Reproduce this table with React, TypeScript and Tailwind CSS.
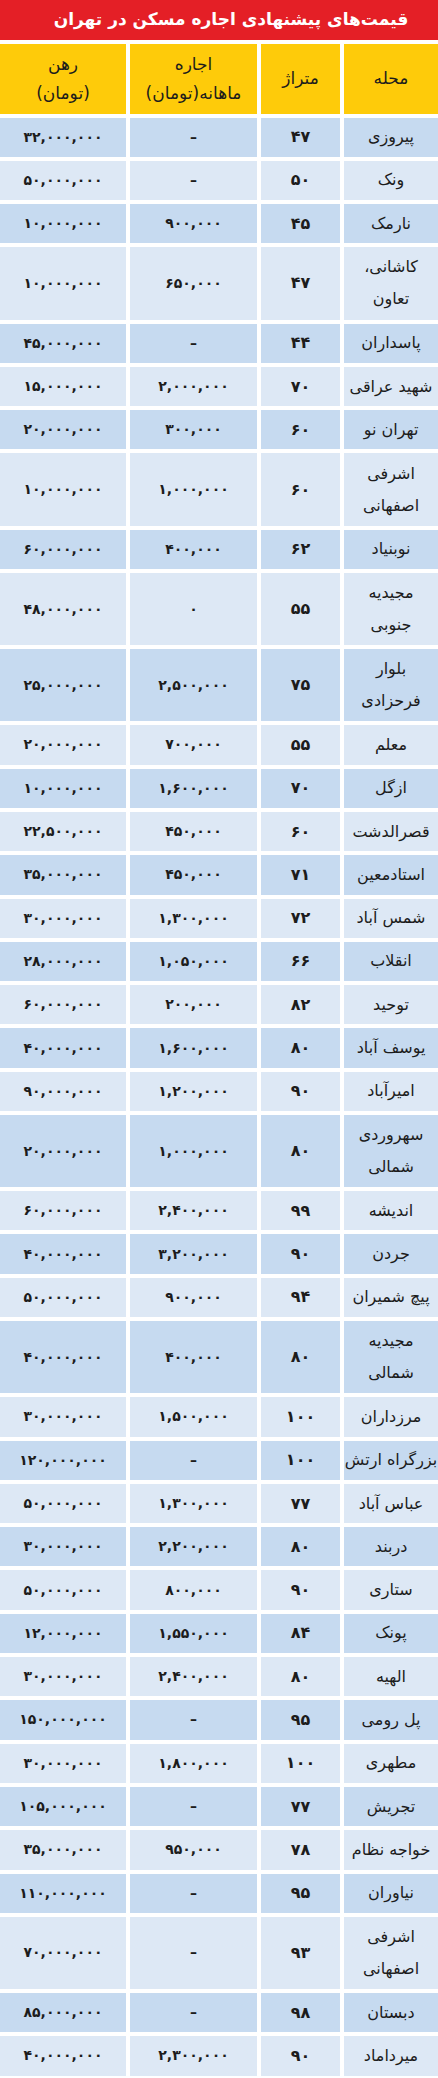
import React from "react";

const fa = (s: string) => s.replace(/[0-9]/g, (d) => "۰۱۲۳۴۵۶۷۸۹"[Number(d)]);

type Row = { name: string[]; area: string; rent: string; deposit: string };

const rows: Row[] = [
  { name: ["پیروزی"], area: "47", rent: "-", deposit: "32,000,000" },
  { name: ["ونک"], area: "50", rent: "-", deposit: "50,000,000" },
  { name: ["نارمک"], area: "45", rent: "900,000", deposit: "10,000,000" },
  { name: ["کاشانی،", "تعاون"], area: "47", rent: "650,000", deposit: "10,000,000" },
  { name: ["پاسداران"], area: "44", rent: "-", deposit: "45,000,000" },
  { name: ["شهید عراقی"], area: "70", rent: "2,000,000", deposit: "15,000,000" },
  { name: ["تهران نو"], area: "60", rent: "300,000", deposit: "20,000,000" },
  { name: ["اشرفی", "اصفهانی"], area: "60", rent: "1,000,000", deposit: "10,000,000" },
  { name: ["نوبنیاد"], area: "62", rent: "400,000", deposit: "60,000,000" },
  { name: ["مجیدیه", "جنوبی"], area: "55", rent: "0", deposit: "48,000,000" },
  { name: ["بلوار", "فرحزادی"], area: "75", rent: "2,500,000", deposit: "25,000,000" },
  { name: ["معلم"], area: "55", rent: "700,000", deposit: "20,000,000" },
  { name: ["ازگل"], area: "70", rent: "1,600,000", deposit: "10,000,000" },
  { name: ["قصرالدشت"], area: "60", rent: "450,000", deposit: "22,500,000" },
  { name: ["استادمعین"], area: "71", rent: "450,000", deposit: "35,000,000" },
  { name: ["شمس آباد"], area: "72", rent: "1,300,000", deposit: "30,000,000" },
  { name: ["انقلاب"], area: "66", rent: "1,050,000", deposit: "28,000,000" },
  { name: ["توحید"], area: "82", rent: "200,000", deposit: "60,000,000" },
  { name: ["یوسف آباد"], area: "80", rent: "1,600,000", deposit: "40,000,000" },
  { name: ["امیرآباد"], area: "90", rent: "1,200,000", deposit: "90,000,000" },
  { name: ["سهروردی", "شمالی"], area: "80", rent: "1,000,000", deposit: "20,000,000" },
  { name: ["اندیشه"], area: "99", rent: "2,400,000", deposit: "60,000,000" },
  { name: ["جردن"], area: "90", rent: "3,200,000", deposit: "40,000,000" },
  { name: ["پیچ شمیران"], area: "94", rent: "900,000", deposit: "50,000,000" },
  { name: ["مجیدیه", "شمالی"], area: "80", rent: "400,000", deposit: "40,000,000" },
  { name: ["مرزداران"], area: "100", rent: "1,500,000", deposit: "30,000,000" },
  { name: ["بزرگراه ارتش"], area: "100", rent: "-", deposit: "120,000,000" },
  { name: ["عباس آباد"], area: "77", rent: "1,300,000", deposit: "50,000,000" },
  { name: ["دربند"], area: "80", rent: "2,200,000", deposit: "30,000,000" },
  { name: ["ستاری"], area: "90", rent: "800,000", deposit: "50,000,000" },
  { name: ["پونک"], area: "84", rent: "1,550,000", deposit: "12,000,000" },
  { name: ["الهیه"], area: "80", rent: "2,400,000", deposit: "30,000,000" },
  { name: ["پل رومی"], area: "95", rent: "-", deposit: "150,000,000" },
  { name: ["مطهری"], area: "100", rent: "1,800,000", deposit: "30,000,000" },
  { name: ["تجریش"], area: "77", rent: "-", deposit: "105,000,000" },
  { name: ["خواجه نظام"], area: "78", rent: "950,000", deposit: "35,000,000" },
  { name: ["نیاوران"], area: "95", rent: "-", deposit: "110,000,000" },
  { name: ["اشرفی", "اصفهانی"], area: "93", rent: "-", deposit: "70,000,000" },
  { name: ["دبستان"], area: "98", rent: "-", deposit: "85,000,000" },
  { name: ["میرداماد"], area: "90", rent: "2,300,000", deposit: "40,000,000" },
];

export default function App() {
  return (
    <div
      dir="rtl"
      className="w-[438px] bg-white text-[#1c1c1c] overflow-hidden"
      style={{ fontFamily: '"DejaVu Sans", "Noto Sans", sans-serif' }}
    >
      <div className="h-[40px] bg-[#e41f26] flex items-center justify-center pl-[24px] text-white text-[17px] font-bold whitespace-nowrap">
        قیمت‌های پیشنهادی اجاره مسکن در تهران
      </div>

      <div className="mt-[3.5px] grid grid-cols-[94px_79px_127px_126px] gap-x-[4px] h-[70px] text-[17px] leading-[29px]">
        <div className="bg-[#fecb0a] flex items-center justify-center">محله</div>
        <div className="bg-[#fecb0a] flex items-center justify-center">متراژ</div>
        <div className="bg-[#fecb0a] flex flex-col items-center justify-center">
          <span>اجاره</span>
          <span>ماهانه(تومان)</span>
        </div>
        <div className="bg-[#fecb0a] flex flex-col items-center justify-center">
          <span>رهن</span>
          <span>(تومان)</span>
        </div>
      </div>

      <div className="mt-[4px] flex flex-col gap-y-[4px]">
        {rows.map((r, i) => {
          const bg = i % 2 === 0 ? "bg-[#c6daf0]" : "bg-[#dde8f5]";
          const tall = r.name.length > 1;
          return (
            <div
              key={i}
              className={`grid grid-cols-[94px_79px_127px_126px] gap-x-[4px] ${tall ? "h-[72.2px]" : "h-[39.3px]"}`}
            >
              <div className={`${bg} flex flex-col items-center justify-center text-[16px] leading-[32px] whitespace-nowrap`}>
                {r.name.map((n) => (
                  <span key={n}>{n}</span>
                ))}
              </div>
              <div className={`${bg} flex items-center justify-center text-[16px] font-bold`}>{fa(r.area)}</div>
              <div className={`${bg} flex items-center justify-center text-[14px] font-bold`} dir="ltr">
                {r.rent === "-" ? "–" : fa(r.rent)}
              </div>
              <div className={`${bg} flex items-center justify-center text-[14px] font-bold`} dir="ltr">
                {fa(r.deposit)}
              </div>
            </div>
          );
        })}
      </div>
    </div>
  );
}
